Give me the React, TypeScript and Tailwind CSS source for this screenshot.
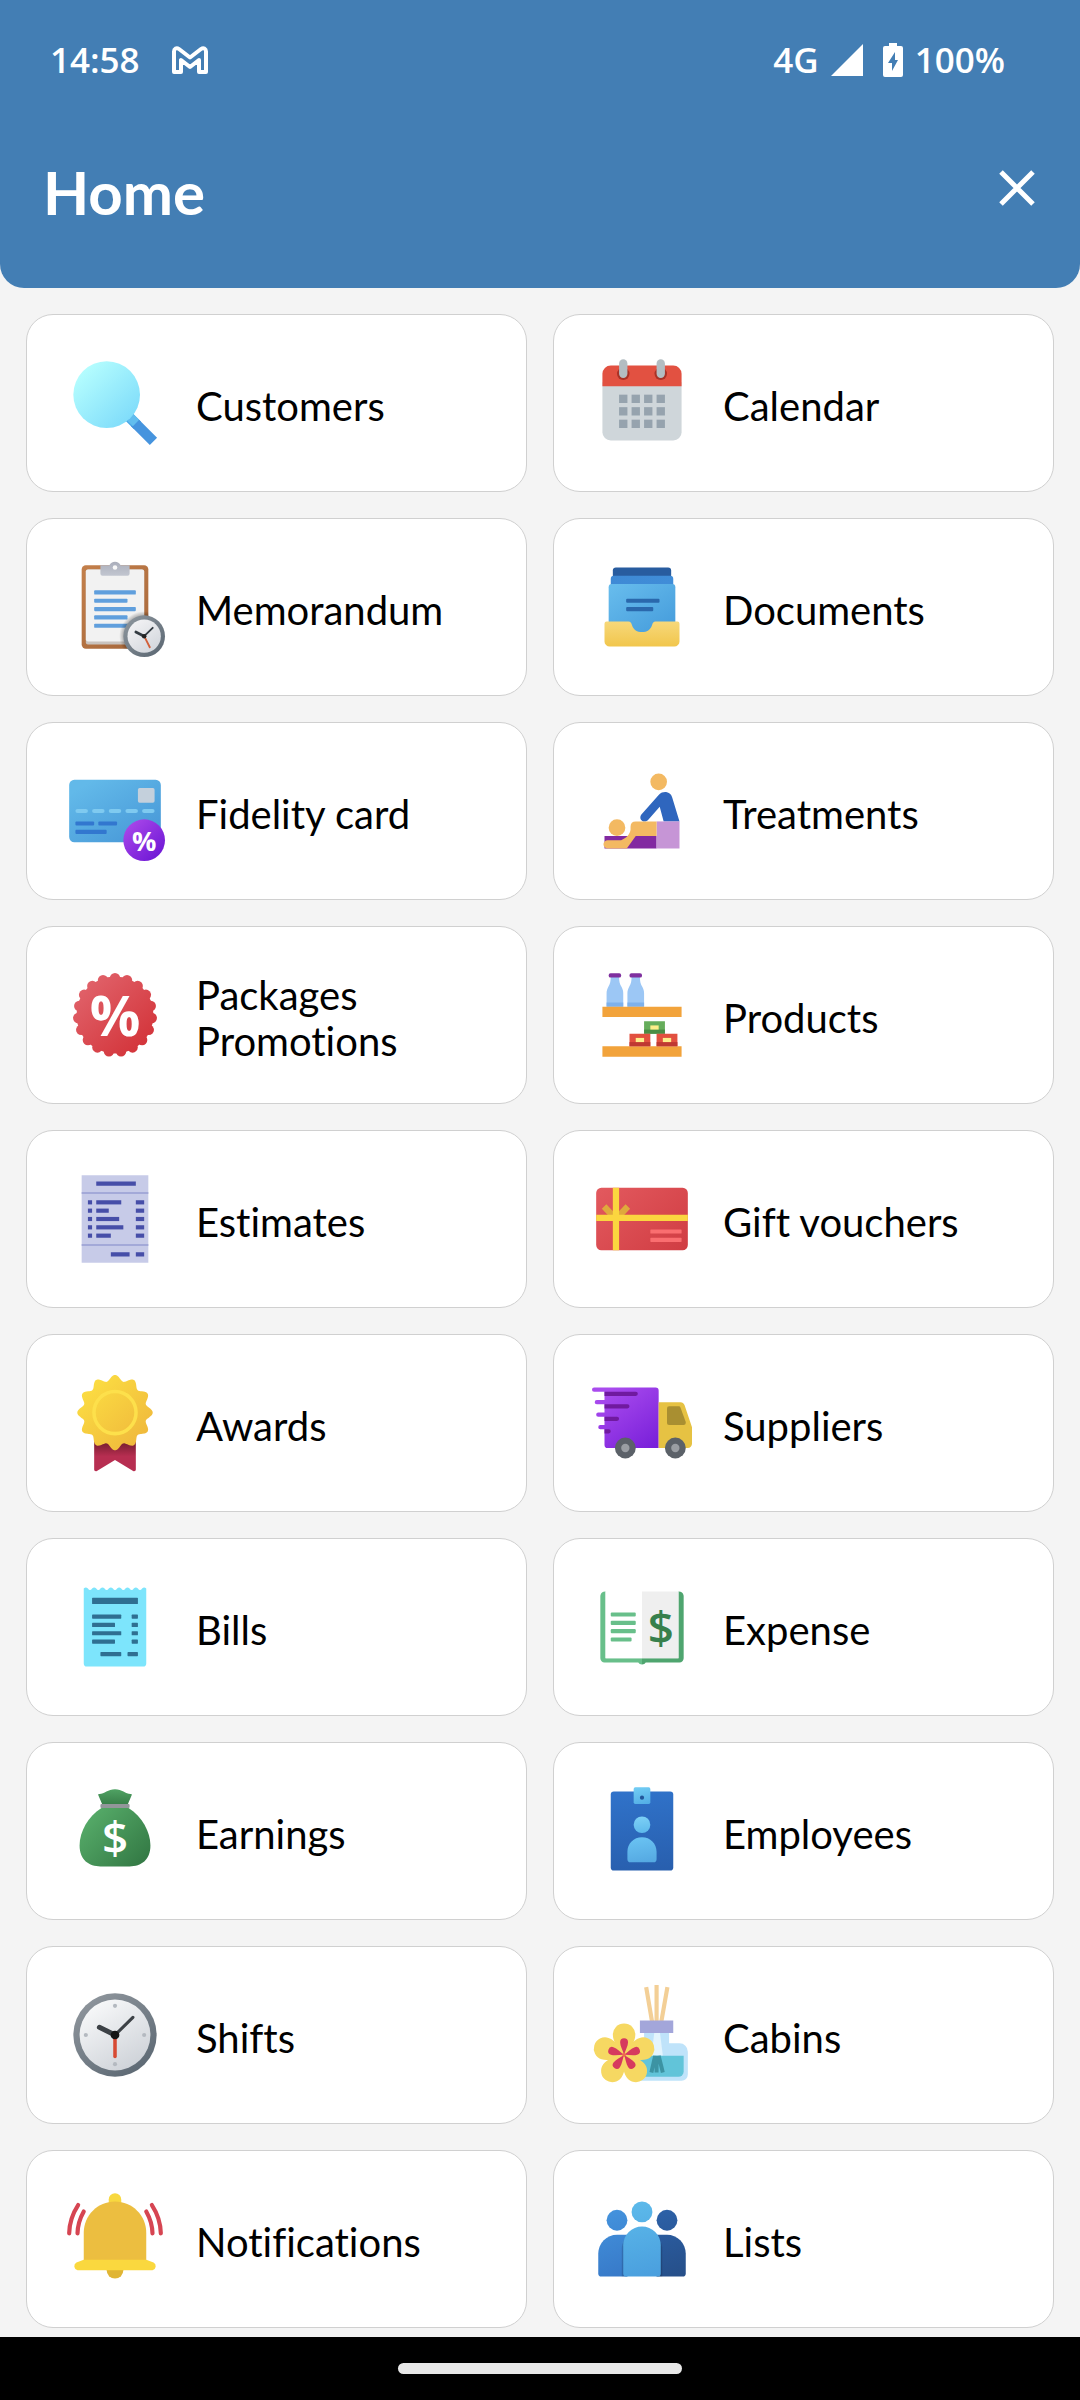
import type { ReactNode } from 'react';

type GradientProps = {
  id: string;
  from: string;
  to: string;
  x1?: number;
  y1?: number;
  x2?: number;
  y2?: number;
};

function Gradient({ id, from, to, x1 = 6, y1 = 4, x2 = 42, y2 = 44 }: GradientProps) {
  return (
    <linearGradient id={id} gradientUnits="userSpaceOnUse" x1={x1} y1={y1} x2={x2} y2={y2}>
      <stop offset="0" stopColor={from} />
      <stop offset="1" stopColor={to} />
    </linearGradient>
  );
}

function Icon({ children }: { children: ReactNode }) {
  return (
    <svg viewBox="0 0 48 48" className="size-[100px] shrink-0 overflow-visible" aria-hidden="true">
      {children}
    </svg>
  );
}

function wavyCircle(cx: number, cy: number, radius: number, depth: number, count: number) {
  const steps = 360;
  let d = '';
  for (let i = 0; i < steps; i++) {
    const a = (i / steps) * Math.PI * 2;
    const r = radius + depth * Math.cos(a * count);
    d += `${i ? 'L' : 'M'}${(cx + r * Math.sin(a)).toFixed(2)},${(cy - r * Math.cos(a)).toFixed(2)}`;
  }
  return d + 'z';
}

const awardEdge = wavyCircle(24, 19, 16.7, 1.4, 12);
const scallops = Array.from({ length: 19 }, (_, i) => (i / 19) * Math.PI * 2);

const CustomersIcon = () => (
  <Icon>
    <Gradient id="lens" from="#b4fdfe" to="#7fdcfa" x1={9} y1={8} x2={32} y2={32} />
    <path fill="#49a5e6" d="M31.7 28.2 28.2 31.7 33 36.5 36.5 33z" />
    <path fill="#4694de" d="M35.2 31.7 31.7 35.2 40.7 44.2 44.2 40.7z" />
    <path fill="#62bdee" d="M32.7 29.2 30 32.6 32.6 35.2 35.6 32z" />
    <circle cx="20" cy="20" r="16" fill="url(#lens)" />
  </Icon>
);

const CalendarIcon = () => (
  <Icon>
    <path fill="#cfd6da" d="M5 38V14h38v24a4 4 0 0 1-4 4H9a4 4 0 0 1-4-4z" />
    <path fill="#e25141" d="M43 10v6H5v-6a4 4 0 0 1 4-4h30a4 4 0 0 1 4 4z" />
    <circle cx="15" cy="10" r="3" fill="#a93226" />
    <circle cx="33" cy="10" r="3" fill="#a93226" />
    <rect x="13" y="3" width="4" height="9" rx="2" fill="#b3bdc2" />
    <rect x="31" y="3" width="4" height="9" rx="2" fill="#b3bdc2" />
    {[20, 26, 32].map((y) =>
      [13, 19, 25, 31].map((x) => <rect key={`${x}-${y}`} x={x} y={y} width="4" height="4" fill="#96a3ae" />),
    )}
  </Icon>
);

const MemorandumIcon = () => (
  <Icon>
    <Gradient id="board" from="#c4804b" to="#a5663a" />
    <Gradient id="memo-rim" from="#8a939b" to="#5c6873" x1={30} y1={30} x2={46} y2={47} />
    <Gradient id="memo-clip" from="#a9adba" to="#c2c6d0" x1={24} y1={2} x2={24} y2={9} />
    <Gradient id="memo-face" from="#f2f2f4" to="#d3d7dd" x1={33} y1={31} x2={43} y2={45} />
    <radialGradient id="memo-shade" gradientUnits="userSpaceOnUse" cx="38" cy="38" r="12">
      <stop offset="0.8" stopColor="#000" stopOpacity="0.3" />
      <stop offset="1" stopColor="#000" stopOpacity="0" />
    </radialGradient>
    <rect x="8" y="4" width="32" height="40" rx="2" fill="url(#board)" />
    <rect x="10" y="6" width="28" height="36" rx="1" fill="#c9c3be" />
    <rect x="10" y="6" width="28" height="34.5" rx="1" fill="#f2f2f2" />
    <path fill="url(#memo-clip)" d="M21.3 4a3 3 0 0 1 5.4 0H31v4a1 1 0 0 1-1 1H18a1 1 0 0 1-1-1V4z" />
    <circle cx="24" cy="5" r="1.1" fill="#f8f8f8" />
    {[20, 16, 20, 16, 20].map((w, i) => (
      <rect key={i} x="14" y={16 + i * 4} width={w} height="2" rx="0.4" fill="#609fdd" />
    ))}
    <path fill="url(#memo-shade)" d="M26 26H40V44H26z" />
    <circle cx="38" cy="38" r="10" fill="url(#memo-rim)" />
    <circle cx="38" cy="38" r="8" fill="url(#memo-face)" />
    <path d="M38 38 40.7 43.3" stroke="#d2603a" strokeWidth="0.9" strokeLinecap="round" />
    <path d="M38 38 42.1 34" stroke="#333b42" strokeWidth="0.9" strokeLinecap="round" />
    <path d="M38 38 34 36" stroke="#333b42" strokeWidth="1.3" strokeLinecap="round" />
    <circle cx="38" cy="38" r="1.1" fill="#222" />
  </Icon>
);

const DocumentsIcon = () => (
  <Icon>
    <Gradient id="doc-front" from="#66bbec" to="#469ddc" x1={12} y1={13} x2={30} y2={40} />
    <Gradient id="doc-mid" from="#3e88d4" to="#4292dc" />
    <Gradient id="tray" from="#f7d87a" to="#f1c64c" x1={24} y1={31} x2={24} y2={43} />
    <rect x="10" y="5" width="28" height="10" rx="1.5" fill="#285c9f" />
    <rect x="9" y="9" width="30" height="10" rx="1.5" fill="url(#doc-mid)" />
    <path fill="url(#doc-front)" d="M9.500 13h29A1.500 1.500 0 0 1 40 14.500V40H8V14.500A1.500 1.500 0 0 1 9.500 13z" />
    <rect x="16.4" y="20" width="16" height="2" rx="0.5" fill="#2a68ac" />
    <rect x="16.4" y="24" width="13" height="2" rx="0.5" fill="#2a68ac" />
    <path
      fill="url(#tray)"
      d="M7 31h10.5c1 0 1.3.6 1.7 1.7C20 35 21.6 36 24 36s4-1 4.8-3.3c.4-1.1.7-1.700 1.700-1.700H41a1 1 0 0 1 1 1v8.500A2.500 2.500 0 0 1 39.500 43h-31A2.500 2.500 0 0 1 6 40.500V32a1 1 0 0 1 1-1z"
    />
  </Icon>
);

const FidelityIcon = () => (
  <Icon>
    <Gradient id="card-blue" from="#62b9e9" to="#4a9bd9" x1={12} y1={10} x2={30} y2={40} />
    <Gradient id="badge-purple" from="#a544e8" to="#7019d6" x1={31} y1={31} x2={45} y2={46} />
    <rect x="2" y="9" width="44" height="30" rx="2.5" fill="url(#card-blue)" />
    <rect x="35" y="13" width="8" height="7" rx="0.8" fill="#c4d0dc" />
    {[5, 13, 21, 29, 37].map((x) => (
      <rect key={x} x={x} y="23" width="6" height="2" rx="1" fill="#7fcaf0" />
    ))}
    <rect x="5" y="29" width="9" height="2" rx="0.5" fill="#3277cf" />
    <rect x="16" y="29" width="9" height="2" rx="0.5" fill="#3277cf" />
    <rect x="5" y="33" width="15" height="2" rx="0.5" fill="#3277cf" />
    <circle cx="38" cy="38" r="10" fill="url(#badge-purple)" />
    <text x="38" y="43" textAnchor="middle" fill="#fff" className="font-['Open_Sans',sans-serif] text-[13px] font-bold">
      %
    </text>
  </Icon>
);

const TreatmentsIcon = () => (
  <Icon>
    <circle cx="32" cy="10" r="4" fill="#f3b962" />
    <path
      fill="#2f66be"
      d="M23.6 25.8 32 16.3C33.3 15 34.6 14.8 36 15c1.3.3 2.1 1.1 2.5 2.5L42 29h-7.600l-1.900-7-5.700 6.400c-2 1.800-4.600-.4-3.200-2.600z"
    />
    <path fill="#8229a1" d="M6 36h25v6H6z" />
    <path fill="#c695d6" d="M31 29h11v13H31z" />
    <circle cx="12" cy="32" r="4" fill="#f3b962" />
    <path fill="#f3b962" d="M21 29h10v7H21l-4.300 6H7.500A2 2 0 0 1 7.500 38H14c2.500-1 4.200-2.800 4.500-5v-1.500Q18.500 29 21 29z" />
  </Icon>
);

const PackagesIcon = () => (
  <Icon>
    <Gradient id="seal" from="#e06068" to="#d3343a" x1={10} y1={10} x2={38} y2={40} />
    <g fill="url(#seal)">
      <circle cx="24" cy="24" r="18.5" />
      {scallops.map((a) => (
        <circle key={a} cx={24 + 17.7 * Math.sin(a)} cy={24 - 17.7 * Math.cos(a)} r="2.5" />
      ))}
    </g>
    <text x="24" y="34" textAnchor="middle" fill="#fff" className="font-['Open_Sans',sans-serif] text-[27px] font-bold">
      %
    </text>
  </Icon>
);

const Box = ({ x, y, main, dark }: { x: number; y: number; main: string; dark: string }) => (
  <g>
    <rect x={x} y={y} width="10" height="6" fill={main} />
    <rect x={x} y={y + 4} width="10" height="2" fill={dark} />
    <rect x={x + 3} y={y + 2} width="4" height="2" fill="#fdee8a" />
  </g>
);

const ProductsIcon = () => (
  <Icon>
    {[7, 17].map((x) => (
      <g key={x} transform={`translate(${x} 0)`}>
        <path fill="#9cc7f5" d="M2 5h4c0 3 .3 4 1.200 5.500.5 1 .8 1.700.8 3V20H0v-6.500c0-1.300.3-2 .8-3C1.700 9 2 8 2 5z" />
        <path fill="#7db1ec" d="M0 18h8v2H0z" />
        <rect x="1" y="4" width="6" height="2" rx="0.9" fill="#7f309f" />
      </g>
    ))}
    <path fill="#f2a33b" d="M5 20h38v5H5zM5 39h38v5H5z" />
    <Box x={25} y={27} main="#66ad5b" dark="#4a8c45" />
    <Box x={18} y={33} main="#e2503f" dark="#bf3932" />
    <Box x={31} y={33} main="#e2503f" dark="#bf3932" />
  </Icon>
);

const EstimatesIcon = () => (
  <Icon>
    <path fill="#c7cbe8" d="M8 3h32v42H8z" />
    <path fill="#a3a9d8" d="M8 11h32v1H8zM8 36h32v1H8z" />
    <g fill="#464ea8">
      <path d="M15 6h19v2H15zM22 40h9v2h-9zM34 40h4v2h-4z" />
      {[12, 6, 11, 13, 7].map((w, i) => (
        <g key={i}>
          <rect x="11" y={15 + i * 4} width="2" height="2" />
          <rect x="15" y={15 + i * 4} width={w} height="2" />
          <rect x="34" y={15 + i * 4} width="4" height="2" />
        </g>
      ))}
    </g>
  </Icon>
);

const GiftIcon = () => (
  <Icon>
    <Gradient id="gift" from="#e35a5f" to="#d03c42" />
    <rect x="2" y="9" width="44" height="30" rx="2.5" fill="url(#gift)" />
    <path d="M5.800 18 11.500 24 17.200 18" fill="none" stroke="#dfa93c" strokeWidth="3" strokeLinejoin="round" />
    <path fill="#fbd63f" d="M10 9h3v30h-3z" />
    <path fill="#fbd63f" d="M2 22h44v3H2z" />
    <rect x="28" y="29" width="15" height="2" rx="0.3" fill="#fa6e70" />
    <rect x="28" y="33" width="15" height="2" rx="0.3" fill="#fa6e70" />
  </Icon>
);

const AwardsIcon = () => (
  <Icon>
    <Gradient id="ribbon" from="#7d1f33" to="#b72e51" x1={24} y1={34} x2={24} y2={40} />
    <Gradient id="medal" from="#fbdb42" to="#f0ba3c" x1={12} y1={7} x2={36} y2={32} />
    <path
      fill="url(#ribbon)"
      d="M14 32h20v14.3c0 .7-.7 1-1.3.7L24 41.8 15.3 47c-.6.3-1.300 0-1.300-.7z"
    />
    <path fill="url(#medal)" d={awardEdge} />
    <circle cx="24" cy="19" r="10.1" fill="none" stroke="#fde04b" strokeWidth="1.7" />
  </Icon>
);

const SuppliersIcon = () => (
  <Icon>
    <Gradient id="cargo" from="#a94bee" to="#761dd8" x1={8} y1={8} x2={30} y2={38} />
    <path
      fill="url(#cargo)"
      d="M1 7h29.500A1.500 1.500 0 0 1 32 8.500V36H7.500A1.500 1.500 0 0 1 6 34.500V27H4a1 1 0 0 1 0-2h2v-4H3a1 1 0 0 1 0-2h3v-4H2.300a1 1 0 0 1 0-2H6V9H1a1 1 0 0 1 0-2z"
    />
    <path
      fill="#701a9f"
      d="M6 9h15a1 1 0 0 1 0 2H6zM6 15h11a1 1 0 0 1 0 2H6zM6 21h6a1 1 0 0 1 0 2H6zM6 27h2a1 1 0 0 1 0 2H6z"
    />
    <path fill="#e6c243" d="M32 14h10.500c.9 0 1.600.5 1.900 1.400L48 26v8a2 2 0 0 1-2 2H32z" />
    <path fill="#a98f31" d="M37 16h4.500c.5 0 .8.2 1 .7L45 23.500V24a1 1 0 0 1-1 1h-7a1 1 0 0 1-1-1v-7a1 1 0 0 1 1-1z" />
    {[16, 40].map((x) => (
      <g key={x}>
        <circle cx={x} cy="36" r="5" fill="#5b6168" />
        <circle cx={x} cy="36" r="2" fill="#9a9ea3" />
      </g>
    ))}
  </Icon>
);

const BillsIcon = () => (
  <Icon>
    <path
      fill="#7de5fc"
      d="M9 5.500q1-1 2 0 1 1.500 2 0 1-1 2 0 1 1.500 2 0 1-1 2 0 1 1.500 2 0 1-1 2 0 1 1.500 2 0 1-1 2 0 1 1.500 2 0 1-1 2 0 1 1.500 2 0 1-1 2 0 1 1.500 2 0 1-1 2 0V41.500A1.500 1.500 0 0 1 37.500 43h-27A1.500 1.500 0 0 1 9 41.500z"
    />
    <g fill="#2f6f91">
      <rect x="13" y="10" width="22" height="3" rx="0.3" />
      {[14, 11, 14, 11].map((w, i) => (
        <g key={i}>
          <rect x="13" y={18 + i * 4} width={w} height="2" rx="0.3" />
          <rect x="32" y={18 + i * 4} width="3" height="2" rx="0.3" />
        </g>
      ))}
      <rect x="17" y="36" width="10" height="2" rx="0.3" />
      <rect x="30" y="36" width="5" height="2" rx="0.3" />
    </g>
  </Icon>
);

const ExpenseIcon = () => (
  <Icon>
    <path fill="#68bf8a" d="M6.500 7A2.500 2.500 0 0 0 4 9v30a2 2 0 0 0 2 2h16.200q.5 1 1.800 1v-3H6.500z" />
    <path fill="#4fa56f" d="M41.500 7A2.500 2.500 0 0 1 44 9v30a2 2 0 0 1-2 2H25.800q-.5 1-1.800 1v-3h17.500z" />
    <path fill="#fff" d="M6.500 7H24v32H6.500z" />
    <path fill="#efefef" d="M24 7h17.500v32H24z" />
    {[12, 12, 12, 10].map((w, i) => (
      <rect key={i} x="9" y={17 + i * 4} width={w} height="2" rx="0.5" fill="#68bf8a" />
    ))}
    <text x="33" y="32" textAnchor="middle" fill="#37804c" className="font-['Open_Sans',sans-serif] text-[22px] font-semibold">
      $
    </text>
  </Icon>
);

const EarningsIcon = () => (
  <Icon>
    <Gradient id="bag" from="#55aa68" to="#347a45" x1={12} y1={16} x2={37} y2={40} />
    <Gradient id="bag-top" from="#4fa263" to="#39804a" x1={24} y1={4} x2={24} y2={11} />
    <path
      fill="url(#bag)"
      d="M17.500 13h13C37 17 41 24.500 41 31c0 7-4.500 10-10 10H17c-5.500 0-10-3-10-10 0-6.500 4-14 10.500-18z"
    />
    <path
      fill="url(#bag-top)"
      d="M16.200 6.200c2.600.2 4.300-2.200 7.800-2.200s5.200 2.400 7.800 2.200c.3.1.3.3.2.6L30 11.500H18L16 6.800c-.1-.3-.1-.5.2-.6z"
    />
    <rect x="17" y="11" width="14" height="2" rx="0.5" fill="#92969a" />
    <text x="24" y="35" textAnchor="middle" fill="#fff" className="font-['Open_Sans',sans-serif] text-[22px] font-semibold">
      $
    </text>
  </Icon>
);

const EmployeesIcon = () => (
  <Icon>
    <Gradient id="id-card" from="#3072c9" to="#285fae" x1={24} y1={5} x2={28} y2={43} />
    <Gradient id="id-clip" from="#70cbf3" to="#53aee6" x1={24} y1={3} x2={26} y2={11} />
    <Gradient id="id-head" from="#7dd0f6" to="#5db9ec" x1={24} y1={17} x2={25} y2={25} />
    <Gradient id="id-body" from="#69c2f2" to="#55a9e2" x1={24} y1={27} x2={26} y2={39} />
    <rect x="9" y="5" width="30" height="38" rx="1.5" fill="url(#id-card)" />
    <rect x="20" y="3" width="8" height="8" rx="0.8" fill="url(#id-clip)" />
    <circle cx="24" cy="8" r="1" fill="#22569a" />
    <circle cx="24" cy="21" r="4" fill="url(#id-head)" />
    <path fill="url(#id-body)" d="M17 34c0-4 3-7 7-7s7 3 7 7v3.500a1.500 1.500 0 0 1-1.500 1.500h-11a1.500 1.500 0 0 1-1.500-1.500z" />
  </Icon>
);

const ShiftsIcon = () => (
  <Icon>
    <Gradient id="clock-rim" from="#8d949b" to="#5d6974" x1={11} y1={7} x2={36} y2={42} />
    <Gradient id="clock-face" from="#f7f8f9" to="#ced2d8" x1={14} y1={9} x2={33} y2={40} />
    <circle cx="24" cy="24" r="20" fill="url(#clock-rim)" />
    <circle cx="24" cy="24" r="17" fill="url(#clock-face)" />
    <g fill="#b4b9c0">
      <circle cx="24" cy="10" r="1" />
      <circle cx="38" cy="24" r="1" />
      <circle cx="24" cy="38" r="1" />
      <circle cx="10" cy="24" r="1" />
    </g>
    <path d="M24 24v10.300" stroke="#d74a33" strokeWidth="1.7" strokeLinecap="round" />
    <path d="M24 24 32.600 15.500" stroke="#3c4146" strokeWidth="1.5" strokeLinecap="round" />
    <path d="M24 24 16.500 20.300" stroke="#3c4146" strokeWidth="2.4" strokeLinecap="round" />
    <circle cx="24" cy="24" r="2.1" fill="#161616" />
  </Icon>
);

const petalAngles = [0, 72, 144, 216, 288];

const CabinsIcon = () => (
  <Icon>
    <path fill="#bfe3fa" d="M25 22h12v6h5a4 4 0 0 1 4 4v11a3 3 0 0 1-3 3H19V36l6-6z" />
    <path fill="#e3f4fd" d="M30 22h2.500l1.500 12h-5.500z" />
    <path fill="#61c4d9" d="M20 34h24v7.500a2.500 2.500 0 0 1-2.500 2.500H20z" />
    <path d="M30.300 34 28.500 42M31 34v8M32 34l2 8" stroke="#3c93a3" strokeWidth="1.9" fill="none" />
    <path d="M26 1 28.800 17.500M36.200 1 33.300 17.500M31 0V17.500" stroke="#f3cf96" strokeWidth="2" fill="none" />
    <path fill="#a3a6da" d="M23 17h16v6H23z" />
    <g transform="translate(15.4 33.5)">
      <circle r="4" fill="#f6d862" />
      {petalAngles.map((a) => (
        <path
          key={a}
          transform={`rotate(${a})`}
          fill="#f6d862"
          d="M0 0C-2.500-2.500-5.400-6-5.400-9.600A5.400 5.400 0 0 1 5.400-9.600C5.400-6 2.500-2.500 0 0z"
        />
      ))}
      {petalAngles.map((a) => (
        <path
          key={a}
          transform={`rotate(${a})`}
          fill="#d63a5e"
          d="M0 0C-.6-2-1.900-4.200-1.900-6A1.900 1.900 0 0 1 1.900-6C1.900-4.200.6-2 0 0z"
        />
      ))}
      <circle r="0.9" fill="#ef6a4f" />
    </g>
  </Icon>
);

const NotificationsIcon = () => (
  <Icon>
    <path d="M6.300 7.700C3.800 11.500 2.100 16 2 21.300M9 10.800C7.200 14 6.100 17 6 21.300" fill="none" stroke="#d64552" strokeWidth="2" strokeLinecap="round" />
    <path d="M41.700 7.700C44.200 11.500 45.900 16 46 21.300M39 10.800C40.800 14 41.900 17 42 21.300" fill="none" stroke="#d64552" strokeWidth="2" strokeLinecap="round" />
    <path fill="#e0b535" d="M20 38h8v1a4 4 0 0 1-8 0z" />
    <path fill="#f8d83f" d="M21 5a3 3 0 0 1 6 0v3h-6z" />
    <path fill="#ecbe40" d="M9 21C9 12.700 15.700 6 24 6s15 6.700 15 15v14H9z" />
    <path fill="#fad83e" d="M9 34h30l3.500 1.300A2 2 0 0 1 42 39H6a2 2 0 0 1-.5-3.700z" />
  </Icon>
);

const ListsIcon = () => (
  <Icon>
    <Gradient id="person-left" from="#4493dd" to="#3779c8" x1={4} y1={11} x2={15} y2={42} />
    <Gradient id="person-mid" from="#5cb9ea" to="#4a9fde" x1={20} y1={7} x2={28} y2={42} />
    <Gradient id="person-right" from="#2c60a6" to="#264f89" x1={34} y1={11} x2={43} y2={42} />
    <circle cx="12" cy="15" r="5" fill="url(#person-left)" />
    <circle cx="36" cy="15" r="5" fill="url(#person-right)" />
    <circle cx="24" cy="11" r="5" fill="url(#person-mid)" />
    <path fill="url(#person-left)" d="M3 31a9 9 0 0 1 9-9h5v20H4.500A1.500 1.500 0 0 1 3 40.500z" />
    <path fill="url(#person-right)" d="M45 31a9 9 0 0 0-9-9h-5v20h12.500a1.500 1.500 0 0 0 1.500-1.500z" />
    <path fill="#000" opacity="0.15" d="M14.300 28A9 9 0 0 1 17 22.500V42h-2.700zM33.700 28a9 9 0 0 0-2.700-5.500V42h2.700z" />
    <path fill="url(#person-mid)" d="M15 27a9 9 0 0 1 18 0v13.500a1.500 1.500 0 0 1-1.500 1.500h-15a1.500 1.500 0 0 1-1.500-1.500z" />
  </Icon>
);

const items: { label: string; Art: () => ReactNode }[] = [
  { label: 'Customers', Art: CustomersIcon },
  { label: 'Calendar', Art: CalendarIcon },
  { label: 'Memorandum', Art: MemorandumIcon },
  { label: 'Documents', Art: DocumentsIcon },
  { label: 'Fidelity card', Art: FidelityIcon },
  { label: 'Treatments', Art: TreatmentsIcon },
  { label: 'Packages\nPromotions', Art: PackagesIcon },
  { label: 'Products', Art: ProductsIcon },
  { label: 'Estimates', Art: EstimatesIcon },
  { label: 'Gift vouchers', Art: GiftIcon },
  { label: 'Awards', Art: AwardsIcon },
  { label: 'Suppliers', Art: SuppliersIcon },
  { label: 'Bills', Art: BillsIcon },
  { label: 'Expense', Art: ExpenseIcon },
  { label: 'Earnings', Art: EarningsIcon },
  { label: 'Employees', Art: EmployeesIcon },
  { label: 'Shifts', Art: ShiftsIcon },
  { label: 'Cabins', Art: CabinsIcon },
  { label: 'Notifications', Art: NotificationsIcon },
  { label: 'Lists', Art: ListsIcon },
];

function StatusBar() {
  return (
    <div className="flex h-[120px] items-center justify-between pl-[50px] pr-[75px] font-['Open_Sans',sans-serif] text-[35px] font-semibold leading-[40px]">
      <div className="flex items-center gap-8">
        <span>14:58</span>
        <svg viewBox="0 0 36 28" className="h-7 w-9" fill="none" stroke="currentColor" strokeWidth="4" strokeLinejoin="round" aria-label="Gmail">
          <path d="M2 5.500C2 2.500 4.500 1.200 7 3L18 11.500 29 3C31.500 1.200 34 2.500 34 5.500V26H27V14L18 21 9 14V26H2z" />
        </svg>
      </div>
      <div className="flex items-center gap-3">
        <span>4G</span>
        <svg viewBox="0 0 32 32" className="size-8" fill="currentColor" aria-label="Signal">
          <path d="M32 0V32H0z" />
        </svg>
        <div className="flex items-center gap-3 pl-2">
          <svg viewBox="0 0 20 34" className="h-[34px] w-5" fill="currentColor" aria-label="Battery charging">
            <path fillRule="evenodd" d="M6 0h8v3h4a2 2 0 0 1 2 2v27a2 2 0 0 1-2 2H2a2 2 0 0 1-2-2V5a2 2 0 0 1 2-2h4zM12 9 5 20H9v8l6-11h-3z" />
          </svg>
          <span>100%</span>
        </div>
      </div>
    </div>
  );
}

export default function App() {
  return (
    <div className="flex min-h-screen flex-col bg-[#f4f4f4] font-['Lato',sans-serif] text-black">
      <header className="rounded-b-3xl bg-[#437eb4] pb-14 text-white">
        <StatusBar />
        <div className="flex h-28 items-center justify-between pl-[43px] pr-[45px] pt-8">
          <h1 className="text-[60px] font-bold leading-[72px]">Home</h1>
          <button type="button" aria-label="Close" className="mb-2 cursor-pointer">
            <svg viewBox="0 0 36 36" className="size-9" fill="none" stroke="currentColor" strokeWidth="5" aria-hidden="true">
              <path d="M2 2 34 34M34 2 2 34" />
            </svg>
          </button>
        </div>
      </header>

      <main className="grow px-[26px] pb-[9px] pt-[26px]">
        <ul className="grid grid-cols-2 gap-[26px]">
          {items.map(({ label, Art }) => (
            <li key={label}>
              <a
                href="#"
                className="flex h-[178px] items-center gap-[31px] rounded-[27px] border border-[#d0d0d0] bg-white pl-[38px] pr-6"
              >
                <Art />
                <span className="whitespace-pre-line pt-1.5 text-[40px] leading-[46px] [font-variant-ligatures:none]">
                  {label}
                </span>
              </a>
            </li>
          ))}
        </ul>
      </main>

      <nav className="flex h-[63px] items-center justify-center bg-black" aria-label="System navigation">
        <button type="button" aria-label="Go home" className="h-[11px] w-[284px] rounded-full bg-[#e8e8e8]" />
      </nav>
    </div>
  );
}
